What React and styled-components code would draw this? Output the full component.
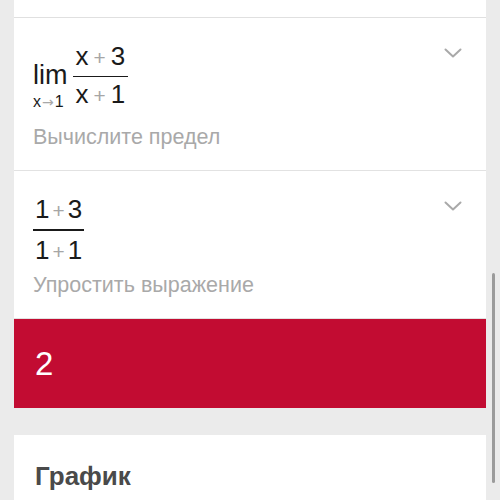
import React from "react";
import styled, { createGlobalStyle } from "styled-components";

const GlobalStyle = createGlobalStyle`
  html, body {
    margin: 0;
    padding: 0;
    background: #ebebeb;
  }
  body {
    font-family: "Liberation Sans", Arial, sans-serif;
    color: #1a1a1a;
  }
`;

const Page = styled.div`
  position: relative;
  width: 500px;
  height: 500px;
  overflow: hidden;
  padding: 0 14px;
  box-sizing: border-box;
`;

const TopStub = styled.div`
  height: 17px;
  background: #fff;
  border-bottom: 1px solid #e0e0e0;
`;

const Step = styled.div`
  display: flex;
  justify-content: space-between;
  align-items: flex-start;
  box-sizing: border-box;
  height: ${p => p.h}px;
  padding: ${p => p.pt}px 24px 0 19px;
  background: #fff;
  border-bottom: 1px solid #e2e2e2;
`;

const Body = styled.div`
  display: flex;
  flex-direction: column;
  align-items: flex-start;
`;

const MathRow = styled.div`
  display: flex;
  align-items: flex-start;
`;

const Limit = styled.div`
  display: flex;
  flex-direction: column;
  align-items: flex-start;
  margin-top: 18px;
  margin-right: 5px;
`;

const LimWord = styled.div`
  font-size: 27px;
  line-height: 28px;
`;

const LimSub = styled.div`
  font-size: 16px;
  line-height: 16px;
  margin-top: 5px;
  white-space: nowrap;
`;

const Arrow = styled.span`
  color: #a8a8a8;
  font-family: "DejaVu Sans", sans-serif;
  font-size: 14px;
  margin: 0 1px;
`;

const Fraction = styled.div`
  display: inline-flex;
  flex-direction: column;
  align-items: center;
  font-size: ${p => p.size}px;
  line-height: 26px;
`;

const Term = styled.div`
  white-space: nowrap;
  padding: 0 ${p => p.pad}px;
`;

const Bar = styled.div`
  align-self: stretch;
  height: 1.5px;
  background: #1a1a1a;
  margin: ${p => p.above}px 0 ${p => p.below}px;
`;

const Plus = styled.span`
  color: #a6a6a6;
  font-size: 0.8em;
  margin: 0 ${p => p.gap}px;
`;

const Caption = styled.div`
  font-size: 21.5px;
  line-height: 24px;
  color: #a9a9a9;
  margin-top: ${p => p.mt}px;
`;

const Chevron = styled.svg`
  flex: none;
  margin-top: ${p => p.mt}px;
`;

const Answer = styled.div`
  display: flex;
  align-items: center;
  height: 89px;
  padding-left: 21px;
  background: #c20c32;
  color: #fff;
  font-size: 33px;
  line-height: 1;
`;

const Gap = styled.div`
  height: 27px;
`;

const GraphCard = styled.div`
  background: #fff;
  height: 80px;
  padding: 26px 21px 0;
`;

const GraphTitle = styled.div`
  font-size: 26px;
  line-height: 30px;
  font-weight: 700;
  color: #4a4a4a;
`;

const Thumb = styled.div`
  position: absolute;
  left: 492px;
  top: 273px;
  width: 3px;
  height: 210px;
  border-radius: 2px;
  background: #9b9b9b;
`;

const Down = ({ mt }) => (
  <Chevron mt={mt} width="18" height="10" viewBox="0 0 18 10">
    <polyline
      points="1.5,1.5 9,8.5 16.5,1.5"
      fill="none"
      stroke="#a9a9a9"
      strokeWidth="2"
      strokeLinecap="round"
      strokeLinejoin="round"
    />
  </Chevron>
);

const Expr = ({ a, b, gap, pad }) => (
  <Term pad={pad}>
    {a}
    <Plus gap={gap}>+</Plus>
    {b}
  </Term>
);

export default function App() {
  return (
    <>
      <GlobalStyle />
      <Page>
        <TopStub />
        <Step h={153} pt={25}>
          <Body>
            <MathRow>
              <Limit>
                <LimWord>lim</LimWord>
                <LimSub>
                  x<Arrow>→</Arrow>1
                </LimSub>
              </Limit>
              <Fraction size={26}>
                <Expr a="x" b="3" gap={5} pad={3} />
                <Bar above={4.5} below={3.5} />
                <Expr a="x" b="1" gap={5} pad={3} />
              </Fraction>
            </MathRow>
            <Caption mt={15}>Вычислите предел</Caption>
          </Body>
          <Down mt={5} />
        </Step>
        <Step h={148} pt={25}>
          <Body>
            <Fraction size={26}>
              <Expr a="1" b="3" gap={3} pad={2} />
              <Bar above={5} below={6} />
              <Expr a="1" b="1" gap={3} pad={2} />
            </Fraction>
            <Caption mt={8}>Упростить выражение</Caption>
          </Body>
          <Down mt={5} />
        </Step>
        <Answer>2</Answer>
        <Gap />
        <GraphCard>
          <GraphTitle>График</GraphTitle>
        </GraphCard>
        <Thumb />
      </Page>
    </>
  );
}
